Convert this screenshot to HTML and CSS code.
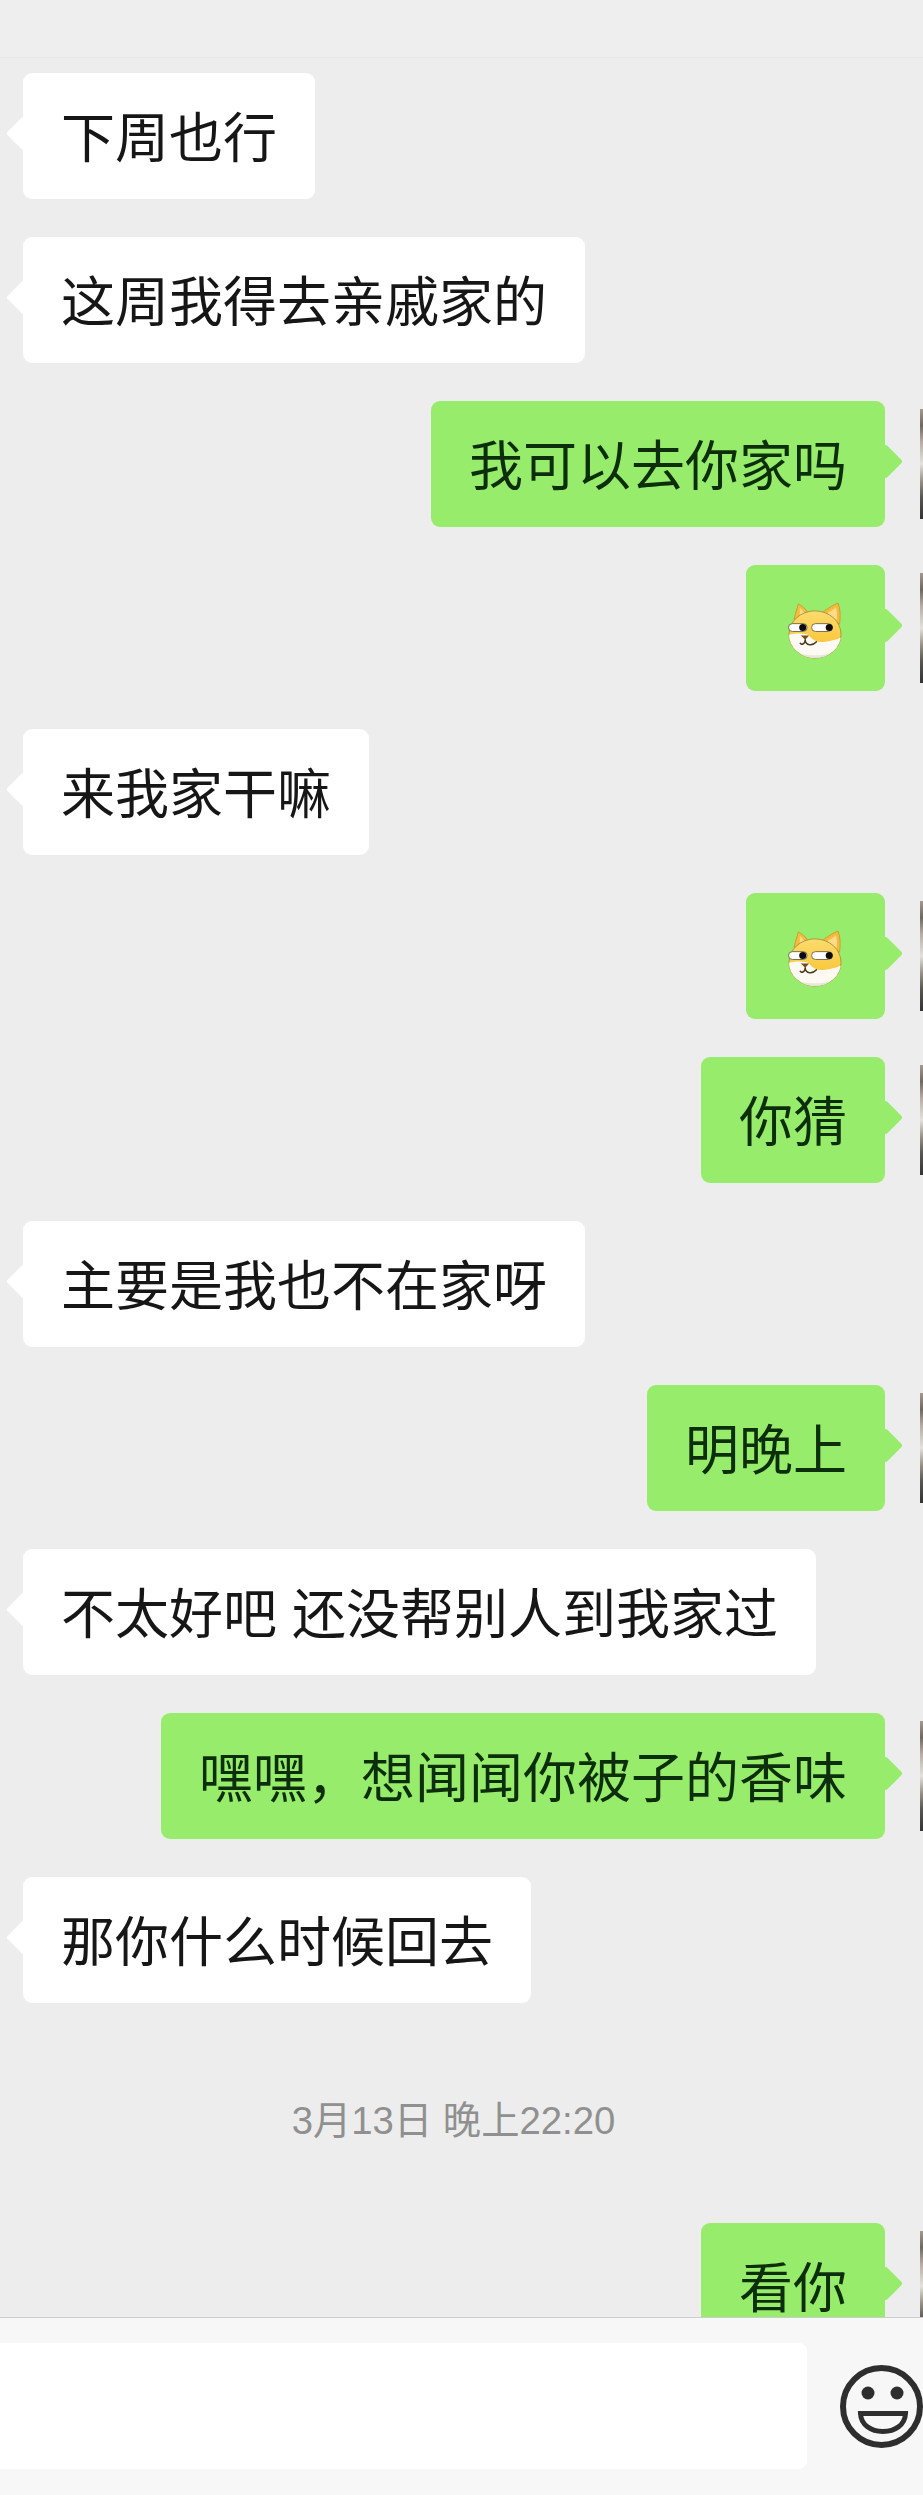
FILE: index.html
```html
<!DOCTYPE html>
<html lang="zh-CN">
<head>
    <meta charset="UTF-8">
    <meta name="viewport" content="width=device-width, initial-scale=1.0">
    <title>Chat</title>
    <link rel="stylesheet" href="styles.css">
</head>
<body>
    <div class="top-bar"></div>

    <!-- Chat messages -->
    <div class="chat">
        <div class="msg left"><div class="bubble">下周也行</div></div>
        <div class="msg left"><div class="bubble">这周我得去亲戚家的</div></div>
        <div class="msg right"><div class="bubble">我可以去你家吗</div><div class="avatar"></div></div>
        <div class="msg right">
            <div class="bubble emoji-bubble">
                <svg class="doge" viewBox="0 0 56 57"><use href="#doge"></use></svg>
            </div>
            <div class="avatar"></div>
        </div>
        <div class="msg left"><div class="bubble">来我家干嘛</div></div>
        <div class="msg right">
            <div class="bubble emoji-bubble">
                <svg class="doge" viewBox="0 0 56 57"><use href="#doge"></use></svg>
            </div>
            <div class="avatar"></div>
        </div>
        <div class="msg right"><div class="bubble">你猜</div><div class="avatar"></div></div>
        <div class="msg left"><div class="bubble">主要是我也不在家呀</div></div>
        <div class="msg right"><div class="bubble">明晚上</div><div class="avatar"></div></div>
        <div class="msg left"><div class="bubble">不太好吧 还没帮别人到我家过</div></div>
        <div class="msg right"><div class="bubble">嘿嘿，想闻闻你被子的香味</div><div class="avatar"></div></div>
        <div class="msg left"><div class="bubble">那你什么时候回去</div></div>
        <div class="time">3月13日 晚上22:20</div>
        <div class="msg right"><div class="bubble">看你</div><div class="avatar"></div></div>
    </div>

    <!-- Input bar -->
    <div class="input-bar">
        <div class="input-box"></div>
        <svg class="smile" viewBox="0 0 84 84">
            <circle cx="42.5" cy="42.5" r="38.5" fill="none" stroke="#2e2e2e" stroke-width="6"></circle>
            <circle cx="29" cy="29" r="6.5" fill="#2e2e2e"></circle>
            <circle cx="58" cy="29" r="6.5" fill="#2e2e2e"></circle>
            <path d="M21.5 49.5H66.5C66 61 56 67.5 44 67.5S22 61 21.5 49.5Z" fill="none" stroke="#2e2e2e" stroke-width="5"></path>
        </svg>
    </div>

    <!-- Sticker shared by the emoji bubbles -->
    <svg class="defs" width="0" height="0">
        <defs>
            <linearGradient id="fur" x1="0" y1="0" x2="0" y2="1">
                <stop offset="0" stop-color="#fcdc6e"></stop>
                <stop offset="0.6" stop-color="#f9ca42"></stop>
                <stop offset="1" stop-color="#f0b630"></stop>
            </linearGradient>
            <clipPath id="face-clip">
                <ellipse cx="27.5" cy="32.5" rx="26.5" ry="24"></ellipse>
            </clipPath>
            <g id="doge">
                <path d="M6 17L10.500 1.500C14 3 18 6.500 21 11Z" fill="#f5bb3a" stroke="#c0953a" stroke-width="0.8"></path>
                <path d="M34 11C39 7 45 3 51 0.500C53.500 7 53.500 15 52.500 22Z" fill="#f5bb3a" stroke="#c0953a" stroke-width="0.8"></path>
                <path d="M12 13L12 5C14 7 16 9 17 11Z" fill="#fcdc8a"></path>
                <path d="M40 11L49 5C50 10 50 14 49.500 18Z" fill="#fcdc8a"></path>
                <ellipse cx="27.5" cy="32.500" rx="26.500" ry="24" fill="url(#fur)" stroke="#b2933f" stroke-width="1"></ellipse>
                <g clip-path="url(#face-clip)">
                    <path d="M0 33C10 31 18 31 22 34C28 43 42 41 56 35V58H0Z" fill="#fcfaf2"></path>
                    <path d="M3 47C12 56 42 56 52 47V58H3Z" fill="#e6e6da"></path>
                </g>
                <rect x="0.500" y="21.500" width="19" height="8" rx="4" fill="#fff" stroke="#7a6a4a" stroke-width="1"></rect>
                <rect x="24" y="21.500" width="21" height="8" rx="4" fill="#fff" stroke="#7a6a4a" stroke-width="1"></rect>
                <circle cx="15" cy="25.500" r="3.600" fill="#0c0c0c"></circle>
                <circle cx="42" cy="25.500" r="3.600" fill="#0c0c0c"></circle>
                <path d="M13 33.500H21.500L17.500 38Z" fill="#7a4a18"></path>
                <path d="M17.500 38C17.500 42 14 43.500 12.500 41.500M17.500 38C18 44 25 44.500 29 40" fill="none" stroke="#4e3a1c" stroke-width="1.500" stroke-linecap="round"></path>
            </g>
        </defs>
    </svg>
</body>
</html>
```

FILE: styles.css
```css
html, body {
    height: 100%;
}
body {
    margin: 0;
    display: flex;
    flex-direction: column;
    height: 2495px;
    overflow: hidden;
    background-color: #ededed;
    font-family: "Liberation Sans", "Noto Sans CJK SC", sans-serif;
}
.top-bar {
    height: 57px;
    flex-shrink: 0;
    background-color: #eeeeee;
    border-bottom: 1px solid #e6e6e6;
}
.chat {
    flex: 1;
    min-height: 0;
    overflow: hidden;
    display: flex;
    flex-direction: column;
    gap: 38px;
    padding: 15px 0 0 23px;
}
.msg {
    display: flex;
    flex-shrink: 0;
    align-items: center;
}
.msg.right {
    justify-content: flex-end;
}
.bubble {
    position: relative;
    padding: 33px 38px 27px;
    font-size: 54px;
    line-height: 66px;
    color: #161616;
    background-color: #ffffff;
    border-radius: 9px;
    white-space: pre;
}
.bubble::before {
    content: '';
    position: absolute;
    top: 50%;
    left: 0;
    width: 25px;
    height: 25px;
    margin: -15px 0 0 -12.500px;
    background-color: inherit;
    border-radius: 3px;
    transform: rotate(45deg);
}
.msg.right .bubble {
    color: #0d2e0a;
    background-color: #98ec6c;
}
.msg.right .bubble::before {
    left: auto;
    right: 0;
    margin: -15px -12.500px 0 0;
}
.emoji-bubble {
    display: flex;
    align-items: center;
    height: 66px;
    padding: 30px 42px;
}
.doge {
    width: 55px;
    height: 57px;
    margin-top: 5px;
}
.avatar {
    width: 3px;
    height: 110px;
    margin-left: 35px;
    background: linear-gradient(#a39a8c, #6f685e 15%, #b5ad9f 30%, #e6e2da 50%, #9a9386 65%, #5a5650 80%, #333333);
}
.time {
    flex-shrink: 0;
    margin: 54px 39px 38px 0;
    font-size: 38.300px;
    line-height: 52px;
    text-align: center;
    color: #909090;
}
.input-bar {
    flex-shrink: 0;
    height: 152px;
    padding: 25px 0 0;
    display: flex;
    align-items: flex-start;
    background-color: #f7f7f7;
    border-top: 1px solid #cccccc;
}
.input-box {
    width: 807px;
    height: 126px;
    background-color: #ffffff;
    border-radius: 0 8px 8px 0;
}
.smile {
    width: 84px;
    height: 84px;
    margin: 21px 0 0 32px;
}
.defs {
    position: absolute;
}
```
